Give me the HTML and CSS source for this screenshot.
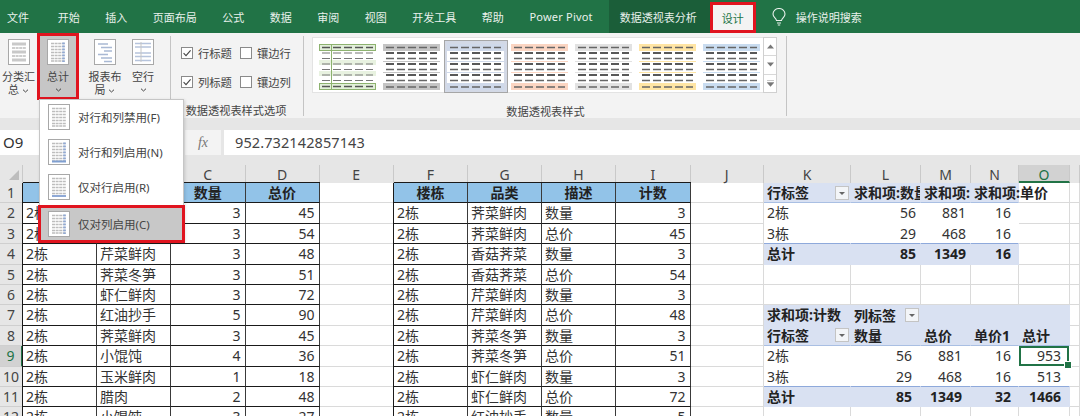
FILE: index.html
```html
<!DOCTYPE html>
<html lang="zh">
<head>
<meta charset="utf-8">
<title>数据透视表 设计</title>
<link rel="stylesheet" href="styles.css">
</head>
<body>
<svg class="defs" width="0" height="0" aria-hidden="true">
  <symbol id="chev" viewBox="0 0 7 4"><path d="M1 .7 3.5 3 6 .7" fill="none" stroke="#444" stroke-width="1"/></symbol>
  <symbol id="check" viewBox="0 0 12 12"><path d="M2.6 6.2 5 8.6 9.6 3.4" fill="none" stroke="#444" stroke-width="1.1"/></symbol>
  <symbol id="base" viewBox="0 0 22 26"><rect x=".5" y=".5" width="21" height="25" fill="#fff" stroke="#a8a8a8"/><path d="M4 4.5H18M4 7.500H18M4 10.500H18M4 13.500H18M4 16.500H18M4 19.500H18M4 22H18" stroke="#bdbdbd" stroke-width="1.6" stroke-dasharray="3 .6"/></symbol>
  <symbol id="side" viewBox="0 0 22 26"><use href="#base"/><path d="M16.500 3.500V23" stroke="#8fa9d6" stroke-width="2.400" stroke-dasharray="1.700 1.300"/></symbol>
  <symbol id="bot" viewBox="0 0 22 26"><use href="#base"/><path d="M4 22H18" stroke="#8fa9d6" stroke-width="2"/></symbol>
  <symbol id="both" viewBox="0 0 22 26"><use href="#side"/><path d="M4 22.500H18" stroke="#7f9fd0" stroke-width="2"/></symbol>
  <symbol id="sub" viewBox="0 0 22 26"><rect x=".5" y=".5" width="21" height="25" fill="#fff" stroke="#a8a8a8"/><path d="M4 5H18M4 13H18M4 21H18" stroke="#c9c9c9" stroke-width="3"/><path d="M4 9H18M4 17H18" stroke="#bdbdbd" stroke-width="1.600" stroke-dasharray="3 .6"/></symbol>
  <symbol id="report" viewBox="0 0 22 26"><rect x=".5" y=".5" width="21" height="25" fill="#fff" stroke="#a8a8a8"/><path d="M4 5H14M7 8.500H18M10 12H18M4 15.500H14M7 19H18M10 22.500H18" stroke="#a9b9d4" stroke-width="1.600"/></symbol>
  <symbol id="blank" viewBox="0 0 22 26"><rect x=".5" y=".5" width="21" height="25" fill="#fff" stroke="#a8a8a8"/><path d="M3 4.500H19M3 8H19M3 14H19M3 17.500H19M3 21.500H19" stroke="#b6c4dc" stroke-width="1.300"/><path d="M9 3V23" stroke="#c6c6c6"/></symbol>
  <symbol id="thumb" viewBox="0 0 57 46">
    <rect width="57" height="6" fill="currentColor"/><rect y="39" width="57" height="7" fill="currentColor"/>
    <path d="M0 6.500H57M0 17.500H57M0 28.500H57" stroke="currentColor"/>
    <path d="M3 3.500H54M3 14.500H54M3 25.500H54M3 36.500H54M3 43H54" stroke="#666" stroke-width="1.400" stroke-dasharray="8 3"/>
    <path d="M3 9H54M3 20H54M3 31H54" stroke="#222" stroke-width="1.400" stroke-dasharray="8 3"/>
  </symbol>
  <symbol id="thumbg" viewBox="0 0 57 46">
    <rect x=".5" y=".5" width="56" height="6" fill="#e2efda" stroke="#8db26f"/><rect x=".5" y="39.500" width="56" height="6" fill="#e2efda" stroke="#8db26f"/>
    <rect y="16" width="57" height="5" fill="#e8f2e0"/><rect y="27" width="57" height="5" fill="#e8f2e0"/>
    <path d="M12.500 0V46" stroke="#8db26f"/>
    <path d="M3 3.500H54M3 42.500H54" stroke="#555" stroke-width="1.400" stroke-dasharray="8 3"/>
    <path d="M3 9H54M3 14.500H54M3 20H54M3 25.500H54M3 31H54M3 36.500H54" stroke="#777" stroke-width="1.200" stroke-dasharray="8 3"/>
  </symbol>
</svg>

<div class="app">
  <nav class="tabs">
    <span class="tab tab-file">文件</span>
    <span class="tab">开始</span>
    <span class="tab">插入</span>
    <span class="tab">页面布局</span>
    <span class="tab">公式</span>
    <span class="tab">数据</span>
    <span class="tab">审阅</span>
    <span class="tab">视图</span>
    <span class="tab">开发工具</span>
    <span class="tab">帮助</span>
    <span class="tab tab-pp">Power Pivot</span>
    <span class="tab tab-ctx">数据透视表分析</span>
    <span class="tab tab-active">设计</span>
    <svg class="bulb" width="14" height="18" viewBox="0 0 14 18"><path d="M4.500 12.500C4 10 1 9.500 1 6a6 5.500 0 0 1 12 0c0 3.500-3 4-3.500 6.500zM5 15H9M5.800 17H8.200" fill="none" stroke="#e9f1ec" stroke-width="1.100"/></svg>
    <span class="tab tab-search">操作说明搜索</span>
  </nav>

  <section class="ribbon">
    <div class="group group-layout">
      <div class="rbtn rbtn-sub"><svg class="ricon"><use href="#sub"/></svg><span>分类汇</span><span>总 <svg class="chev"><use href="#chev"/></svg></span></div>
      <div class="rbtn rbtn-total"><svg class="ricon"><use href="#side"/></svg><span>总计</span><svg class="chev chev-solo"><use href="#chev"/></svg></div>
      <div class="rbtn rbtn-report"><svg class="ricon"><use href="#report"/></svg><span>报表布</span><span>局 <svg class="chev"><use href="#chev"/></svg></span></div>
      <div class="rbtn rbtn-blank"><svg class="ricon"><use href="#blank"/></svg><span>空行</span><svg class="chev chev-solo"><use href="#chev"/></svg></div>
    </div>
    <div class="sep"></div>
    <div class="group group-opts">
      <div class="opts">
        <label class="opt"><span class="cb"><svg width="12" height="12"><use href="#check"/></svg></span>行标题</label>
        <label class="opt"><span class="cb"></span>镶边行</label>
        <label class="opt"><span class="cb"><svg width="12" height="12"><use href="#check"/></svg></span>列标题</label>
        <label class="opt"><span class="cb"></span>镶边列</label>
      </div>
      <div class="group-label">数据透视表样式选项</div>
    </div>
    <div class="sep"></div>
    <div class="group group-styles">
      <div class="gallery-row">
        <div class="gallery">
          <div class="thumb"><svg width="57" height="46"><use href="#thumbg"/></svg></div>
          <div class="thumb t-gray"><svg width="57" height="46"><use href="#thumb"/></svg></div>
          <div class="thumb t-blue thumb-sel"><svg width="57" height="46"><use href="#thumb"/></svg></div>
          <div class="thumb t-orange"><svg width="57" height="46"><use href="#thumb"/></svg></div>
          <div class="thumb t-lgray"><svg width="57" height="46"><use href="#thumb"/></svg></div>
          <div class="thumb t-yellow"><svg width="57" height="46"><use href="#thumb"/></svg></div>
          <div class="thumb t-lblue"><svg width="57" height="46"><use href="#thumb"/></svg></div>
        </div>
        <div class="scroller">
          <div class="sbtn"><svg width="7" height="5" viewBox="0 0 7 5"><path d="M3.500 .5 7 4.500H0z" fill="#777"/></svg></div>
          <div class="sbtn"><svg width="7" height="5" viewBox="0 0 7 5"><path d="M3.500 4.500 7 .5H0z" fill="#777"/></svg></div>
          <div class="sbtn"><svg width="7" height="7" viewBox="0 0 7 7"><path d="M0 .5H7M3.500 6.500 7 2.500H0z" fill="#777" stroke="#777" stroke-width=".4"/></svg></div>
        </div>
      </div>
      <div class="group-label">数据透视表样式</div>
    </div>
    <div class="sep"></div>
  </section>

  <div class="band band-top"></div>

  <div class="formula">
    <div class="namebox">O9</div>
    <div class="fxbox">fx</div>
    <div class="finput">952.732142857143</div>
  </div>

  <div class="band band-bottom"></div>

  <main class="sheet">
    <div class="hd corner"></div><div class="hd">A</div><div class="hd">B</div><div class="hd">C</div><div class="hd">D</div><div class="hd">E</div><div class="hd">F</div><div class="hd">G</div><div class="hd">H</div><div class="hd">I</div><div class="hd">J</div><div class="hd">K</div><div class="hd">L</div><div class="hd">M</div><div class="hd">N</div><div class="hd hd-sel">O</div><div class="hd"></div>

    <div class="rh">1</div>
    <div class="c t th edge-l edge-t">楼栋</div><div class="c t th edge-t">品类</div><div class="c t th edge-t">数量</div><div class="c t th edge-t">总价</div><div class="c"></div>
    <div class="c t th edge-l edge-t">楼栋</div><div class="c t th edge-t">品类</div><div class="c t th edge-t">描述</div><div class="c t th edge-t">计数</div><div class="c"></div>
    <div class="c ph filter-cell">行标签<span class="filter"></span></div><div class="c ph clip">求和项:数量</div><div class="c ph clip">求和项:总价</div><div class="c ph">求和项:单价</div><div class="c"></div><div class="c"></div>

    <div class="rh">2</div>
    <div class="c t edge-l">2栋</div><div class="c t">荠菜鲜肉</div><div class="c t n">3</div><div class="c t n">45</div><div class="c"></div>
    <div class="c t edge-l">2栋</div><div class="c t">荠菜鲜肉</div><div class="c t">数量</div><div class="c t n">3</div><div class="c"></div>
    <div class="c pb">2栋</div><div class="c pb n">56</div><div class="c pb n">881</div><div class="c pb n n7">16</div><div class="c"></div><div class="c"></div>

    <div class="rh">3</div>
    <div class="c t edge-l">2栋</div><div class="c t">香菇荠菜</div><div class="c t n">3</div><div class="c t n">54</div><div class="c"></div>
    <div class="c t edge-l">2栋</div><div class="c t">荠菜鲜肉</div><div class="c t">总价</div><div class="c t n">45</div><div class="c"></div>
    <div class="c pb pb-last">3栋</div><div class="c pb pb-last n">29</div><div class="c pb pb-last n">468</div><div class="c pb pb-last n n7">16</div><div class="c"></div><div class="c"></div>

    <div class="rh">4</div>
    <div class="c t edge-l">2栋</div><div class="c t">芹菜鲜肉</div><div class="c t n">3</div><div class="c t n">48</div><div class="c"></div>
    <div class="c t edge-l">2栋</div><div class="c t">香菇荠菜</div><div class="c t">数量</div><div class="c t n">3</div><div class="c"></div>
    <div class="c pt">总计</div><div class="c pt n">85</div><div class="c pt n">1349</div><div class="c pt n n7">16</div><div class="c"></div><div class="c"></div>

    <div class="rh">5</div>
    <div class="c t edge-l">2栋</div><div class="c t">荠菜冬笋</div><div class="c t n">3</div><div class="c t n">51</div><div class="c"></div>
    <div class="c t edge-l">2栋</div><div class="c t">香菇荠菜</div><div class="c t">总价</div><div class="c t n">54</div><div class="c"></div>
    <div class="c"></div><div class="c"></div><div class="c"></div><div class="c"></div><div class="c"></div><div class="c"></div>

    <div class="rh">6</div>
    <div class="c t edge-l">2栋</div><div class="c t">虾仁鲜肉</div><div class="c t n">3</div><div class="c t n">72</div><div class="c"></div>
    <div class="c t edge-l">2栋</div><div class="c t">芹菜鲜肉</div><div class="c t">数量</div><div class="c t n">3</div><div class="c"></div>
    <div class="c"></div><div class="c"></div><div class="c"></div><div class="c"></div><div class="c"></div><div class="c"></div>

    <div class="rh">7</div>
    <div class="c t edge-l">2栋</div><div class="c t">红油抄手</div><div class="c t n">5</div><div class="c t n">90</div><div class="c"></div>
    <div class="c t edge-l">2栋</div><div class="c t">芹菜鲜肉</div><div class="c t">总价</div><div class="c t n">48</div><div class="c"></div>
    <div class="c ph2">求和项:计数</div><div class="c ph2 filter-cell">列标签<span class="filter"></span></div><div class="c ph2"></div><div class="c ph2"></div><div class="c ph2"></div><div class="c"></div>

    <div class="rh">8</div>
    <div class="c t edge-l">2栋</div><div class="c t">荠菜鲜肉</div><div class="c t n">3</div><div class="c t n">45</div><div class="c"></div>
    <div class="c t edge-l">2栋</div><div class="c t">荠菜冬笋</div><div class="c t">数量</div><div class="c t n">3</div><div class="c"></div>
    <div class="c ph filter-cell">行标签<span class="filter"></span></div><div class="c ph">数量</div><div class="c ph">总价</div><div class="c ph">单价1</div><div class="c ph">总计</div><div class="c"></div>

    <div class="rh rh-sel">9</div>
    <div class="c t edge-l">2栋</div><div class="c t">小馄饨</div><div class="c t n">4</div><div class="c t n">36</div><div class="c"></div>
    <div class="c t edge-l">2栋</div><div class="c t">荠菜冬笋</div><div class="c t">总价</div><div class="c t n">51</div><div class="c"></div>
    <div class="c pb">2栋</div><div class="c pb n n8">56</div><div class="c pb n n8">881</div><div class="c pb n n7">16</div><div class="c pb n n8 selected">953</div><div class="c"></div>

    <div class="rh">10</div>
    <div class="c t edge-l">2栋</div><div class="c t">玉米鲜肉</div><div class="c t n">1</div><div class="c t n">18</div><div class="c"></div>
    <div class="c t edge-l">2栋</div><div class="c t">虾仁鲜肉</div><div class="c t">数量</div><div class="c t n">3</div><div class="c"></div>
    <div class="c pb pb-last">3栋</div><div class="c pb pb-last n n8">29</div><div class="c pb pb-last n n8">468</div><div class="c pb pb-last n n7">16</div><div class="c pb pb-last n n8">513</div><div class="c"></div>

    <div class="rh">11</div>
    <div class="c t edge-l">2栋</div><div class="c t">腊肉</div><div class="c t n">2</div><div class="c t n">48</div><div class="c"></div>
    <div class="c t edge-l">2栋</div><div class="c t">虾仁鲜肉</div><div class="c t">总价</div><div class="c t n">72</div><div class="c"></div>
    <div class="c pt">总计</div><div class="c pt n n8">85</div><div class="c pt n n8">1349</div><div class="c pt n n7">32</div><div class="c pt n n8">1466</div><div class="c"></div>

    <div class="rh">12</div>
    <div class="c t edge-l">2栋</div><div class="c t">小馄饨</div><div class="c t n">3</div><div class="c t n">27</div><div class="c"></div>
    <div class="c t edge-l">2栋</div><div class="c t">红油抄手</div><div class="c t">数量</div><div class="c t n">5</div><div class="c"></div>
    <div class="c"></div><div class="c"></div><div class="c"></div><div class="c"></div><div class="c"></div><div class="c"></div>
  </main>

  <div class="menu">
    <div class="mitem"><svg class="micon"><use href="#base"/></svg>对行和列禁用(F)</div>
    <div class="mitem"><svg class="micon"><use href="#both"/></svg>对行和列启用(N)</div>
    <div class="mitem"><svg class="micon"><use href="#bot"/></svg>仅对行启用(R)</div>
    <div class="mitem mitem-hot"><svg class="micon"><use href="#side"/></svg>仅对列启用(C)</div>
  </div>
</div>
</body>
</html>
```

FILE: styles.css
```css
* { box-sizing: border-box; }
html, body { margin: 0; padding: 0; }
body {
  width: 1080px;
  height: 416px;
  overflow: hidden;
  background: #fff;
  color: #333;
  font-family: "Noto Sans", "Noto Sans CJK SC", sans-serif;
}
.defs { position: absolute; }
.app { position: relative; width: 1080px; height: 416px; display: flex; flex-direction: column; overflow: hidden; }

/* tabs */
.tabs {
  height: 33px;
  flex: none;
  background: #217346;
  display: flex;
  align-items: stretch;
  font-size: 11px;
  color: #e9f1ec;
}
.tab { display: flex; align-items: center; padding: 0 12.75px; white-space: nowrap; }
.tab-file { padding: 0 16px 0 7px; }
.tab-pp { padding: 0 16px 0 13px; letter-spacing: .2px; }
.tab-ctx { background: #1b5e39; padding: 0 13px 0 11px; }
.tab-active {
  width: 46px;
  height: 31px;
  margin-top: 2px;
  padding: 0;
  justify-content: center;
  background: #f3f3f3;
  color: #217346;
  border: 3px solid #e0141f;
}
.bulb { align-self: center; margin-left: 16px; }
.tab-search { padding-left: 10px; }

/* ribbon */
.ribbon { height: 85px; flex: none; background: #f3f3f3; display: flex; color: #444; }
.sep { width: 1px; flex: none; margin: 3px 0 2px; background: #c4c4c4; }
.group { height: 85px; flex: none; }
.group-layout { width: 170px; display: flex; align-items: flex-start; }
.rbtn { height: 67px; display: flex; flex-direction: column; align-items: center; font-size: 11px; line-height: 13px; padding-top: 6px; flex: none; }
.ricon { width: 22px; height: 26px; margin-bottom: 5px; flex: none; }
.chev { width: 7px; height: 4px; vertical-align: middle; }
.chev-solo { margin-top: 5px; }
.rbtn-sub { width: 37px; }
.rbtn-total { width: 42px; background: #c6c6c6; border: 3px solid #e0141f; padding-top: 3px; }
.rbtn-report { width: 34px; margin-left: 9px; }
.rbtn-blank { width: 34px; margin-left: 4px; }
.group-opts { width: 132px; padding-left: 10px; position: relative; }
.opts { display: grid; grid-template-columns: 59px 60px; grid-auto-rows: 29px; padding-top: 5px; font-size: 11.300px; }
.opt { display: flex; align-items: center; gap: 5px; }
.cb { width: 12px; height: 12px; background: #fff; border: 1px solid #8a8a8a; display: block; flex: none; }
.cb svg { display: block; margin: -1px; }
.group-label { font-size: 11.200px; line-height: 14px; text-align: center; white-space: nowrap; color: #444; }
.group-opts .group-label { margin-top: 8px; padding-right: 12px; }
.group-styles { width: 482px; padding: 4px 0 0 8px; }
.gallery-row { display: flex; height: 56px; }
.gallery { width: 451px; display: flex; background: #fff; padding: 2px 0 0 2.500px; border: 1px solid #e3e3e3; border-right: 0; }
.thumb { width: 64px; height: 53px; display: flex; align-items: center; justify-content: center; flex: none; }
.thumb-sel { background: #d3d9e6; outline: 1px solid #a6a6a6; outline-offset: -1px; background-clip: padding-box; }
.t-gray { color: #c4c4c4; }
.t-blue { color: #cfd9ea; }
.t-orange { color: #fbd5c2; }
.t-lgray { color: #e2e2e2; }
.t-yellow { color: #ffe5a4; }
.t-lblue { color: #c9dcf0; }
.t-blue svg { background: #fff; }
.scroller { width: 14px; display: flex; flex-direction: column; border: 1px solid #d0d0d0; background: #fff; }
.sbtn { flex: 1; display: flex; align-items: center; justify-content: center; border-bottom: 1px solid #d8d8d8; }
.sbtn:last-child { border-bottom: 0; }
.group-styles .group-label { margin-top: 12px; padding-right: 7px; }

/* bands and formula bar */
.band { flex: none; background: #e6e6e6; }
.band-top { height: 12px; }
.band-bottom { height: 10px; }
.formula { height: 25px; flex: none; background: #e6e6e6; display: flex; }
.namebox { width: 175px; background: #fff; font-size: 15px; line-height: 25px; padding-left: 3px; color: #333; }
.fxbox { width: 36px; margin-left: 10px; background: #f3f3f3; color: #777; text-align: center; font: italic 14px/25px "Liberation Serif", serif; }
.finput { flex: 1; margin-left: 3px; background: #fff; font-size: 14.500px; line-height: 25px; padding-left: 11px; color: #444; letter-spacing: .1px; }

/* sheet */
.sheet {
  flex: none;
  height: 251px;
  display: grid;
  grid-template-columns: 23px 74px 74px 74.500px 74px 74.500px 74px 74px 74px 74.500px 73.500px 87px 70px 50px 48px 51px 10px;
  grid-template-rows: 18px repeat(12, 20.400px);
  font-size: 14px;
  line-height: 19px;
  background: #fff;
  overflow: hidden;
}
.hd {
  background: #e6e6e6;
  border-right: 1px solid #c9c9c9;
  text-align: center;
  color: #444;
  font-size: 14px;
  line-height: 20px;
}
.corner { position: relative; }
.corner::after {
  content: "";
  position: absolute;
  right: 3px;
  bottom: 3px;
  border-style: solid;
  border-width: 0 0 10px 10px;
  border-color: transparent transparent #bdbdbd transparent;
}
.hd-sel { background: #d2d2d2; color: #217346; border-bottom: 2px solid #217346; }
.rh {
  background: #e6e6e6;
  border-right: 1px solid #c9c9c9;
  border-bottom: 1px solid #cfcfcf;
  text-align: center;
  color: #444;
}
.rh-sel { background: #d2d2d2; color: #217346; border-right: 2px solid #217346; }
.c {
  border-right: 1px solid #dadada;
  border-bottom: 1px solid #dadada;
  padding: 0 3px;
  white-space: nowrap;
  color: #333;
}
.n { text-align: right; padding-right: 4px; }
.n7 { padding-right: 7px; }
.n8 { padding-right: 8px; }
.t { border-right-color: #3a3a3a; border-bottom-color: #1a1a1a; }
.th { background: #92c3e8; font-weight: 700; text-align: center; color: #222; }
.edge-l { box-shadow: -1px 0 0 #1a1a1a; }
.edge-t { box-shadow: 0 -1px 0 #1a1a1a; }
.edge-l.edge-t { box-shadow: -1px 0 0 #1a1a1a, 0 -1px 0 #1a1a1a; }
.ph, .ph2 { background: #d9e1f2; font-weight: 700; border-color: #d9e1f2; color: #222; }
.ph { border-bottom-color: #a9bfe3; }
.clip { overflow: hidden; }
.pb { background: #fff; border-color: #fff; }
.pb.pb-last { border-bottom-color: #8ea9db; }
.pt { background: #d9e1f2; font-weight: 700; border-color: #d9e1f2; color: #222; }
.filter-cell { display: flex; justify-content: space-between; align-items: center; padding-right: 1px; }
.filter { width: 14px; height: 14px; background: #f3f5f8; border: 1px solid #c4c4c4; position: relative; flex: none; }
.filter::after {
  content: "";
  position: absolute;
  left: 3px;
  top: 5px;
  border-style: solid;
  border-width: 3px 3px 0;
  border-color: #666 transparent transparent;
}
.selected { position: relative; box-shadow: inset 0 0 0 2px #217346; }
.selected::after {
  content: "";
  position: absolute;
  right: -3px;
  bottom: -3px;
  width: 6px;
  height: 6px;
  background: #217346;
  border: 1px solid #fff;
}

/* dropdown */
.menu {
  position: absolute;
  left: 39px;
  top: 99px;
  width: 145px;
  height: 143px;
  background: #fff;
  border: 1px solid #c6c6c6;
  box-shadow: 1px 1px 3px rgba(0, 0, 0, .15);
  font-size: 11.500px;
  color: #444;
}
.mitem { height: 35px; display: flex; align-items: center; padding: 0 0 2px 8px; gap: 8px; white-space: nowrap; }
.micon { width: 22px; height: 26px; flex: none; }
.mitem-hot {
  margin: 0 -2px 0 -2px;
  height: 38px;
  padding: 0 0 0 7px;
  background: #c8c8c8;
  border: 3px solid #e0141f;
}
```
